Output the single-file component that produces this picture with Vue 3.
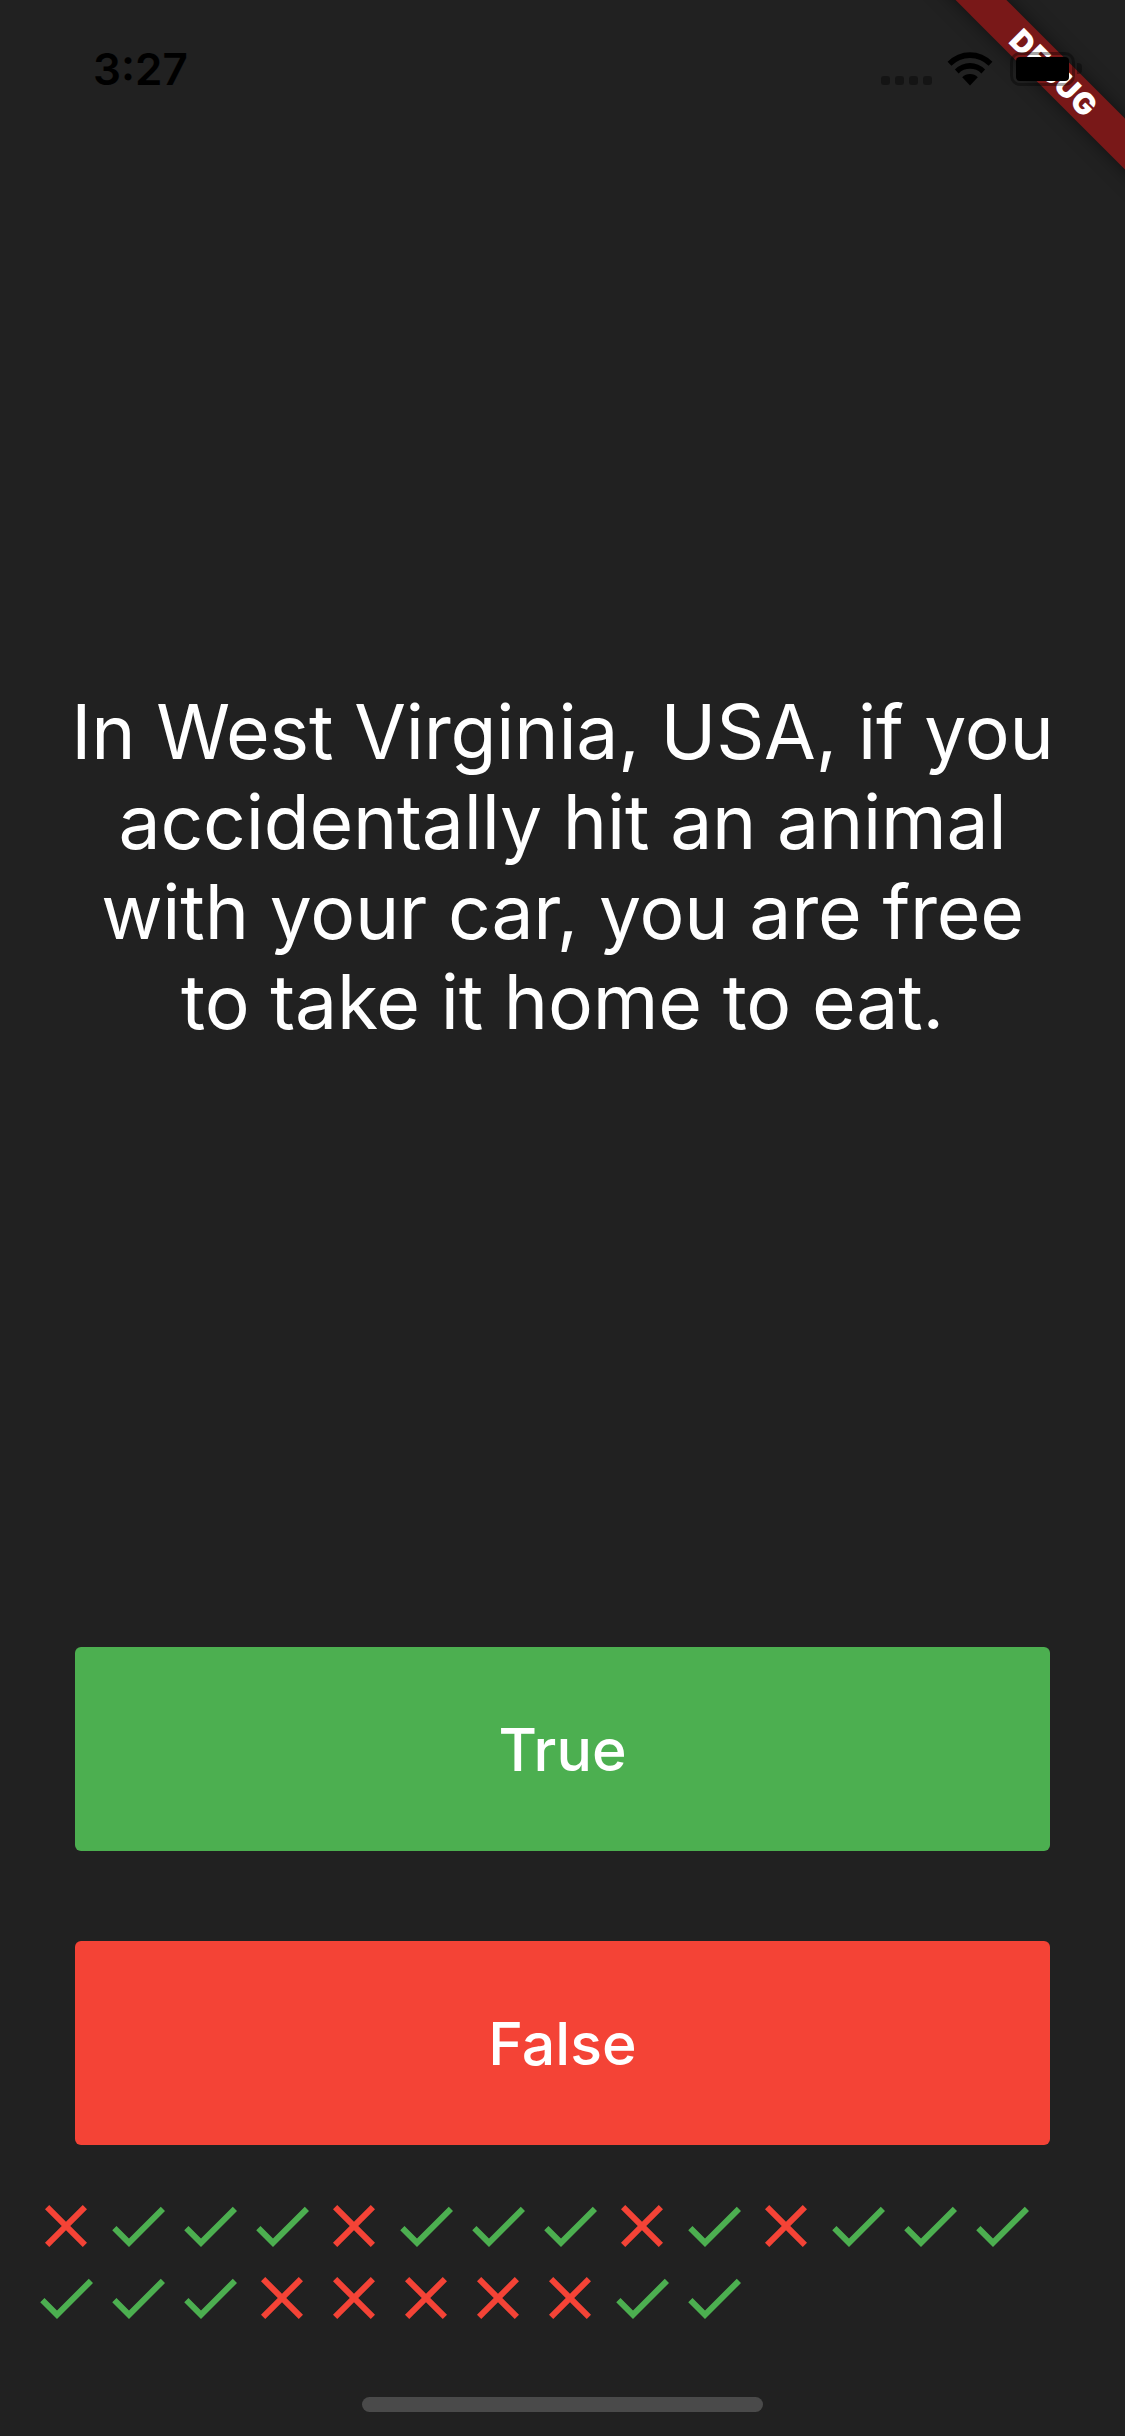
<script setup>
const rows = [
  ['x','c','c','c','x','c','c','c','x','c','x','c','c','c'],
  ['c','c','c','x','x','x','x','x','c','c']
]
const scores = rows.flat()
const check = 'M9 16.17L4.83 12l-1.42 1.41L9 19 21 7l-1.41-1.41z'
const close = 'M19 6.41L17.59 5 12 10.59 6.41 5 5 6.41 10.59 12 5 17.59 6.41 19 12 13.41 17.59 19 19 17.59 13.41 12z'
</script>

<template>
  <div class="screen">
    <header class="status">
      <span class="time">3:27</span>
      <div class="status-icons">
        <div class="dots"><i></i><i></i><i></i><i></i></div>
        <svg class="wifi" width="46" height="34" viewBox="0 0 46 34">
          <path d="M23 33.5 15.2 25.2a11 11 0 0 1 15.6 0z" fill="#000"/>
          <path d="M11.6 21.4 7.9 17.5a21 21 0 0 1 30.2 0l-3.7 3.9a16 16 0 0 0-22.8 0z" fill="#000"/>
          <path d="M4.4 13.8.6 9.8a31 31 0 0 1 44.8 0l-3.8 4a26 26 0 0 0-37.2 0z" fill="#000"/>
        </svg>
        <div class="battery"><div class="battery-fill"></div></div>
      </div>
    </header>

    <main class="question">
      <p>In West Virginia, USA, if you accidentally hit an animal with your car, you are free to take it home to eat.</p>
    </main>

    <div class="actions">
      <button class="answer true">True</button>
      <button class="answer false">False</button>
    </div>

    <div class="scores">
      <svg v-for="(s, i) in scores" :key="i" width="72" height="72" viewBox="0 0 24 24">
        <path :d="s === 'c' ? check : close" :fill="s === 'c' ? '#4caf50' : '#f44336'"/>
      </svg>
    </div>

    <div class="home-bar"><div class="home-pill"></div></div>

    <div class="banner"><span>DEBUG</span></div>
  </div>
</template>

<style scoped>
.screen {
  position: relative;
  width: 1125px;
  height: 2436px;
  overflow: hidden;
  background: #212121;
  display: flex;
  flex-direction: column;
  font-family: Inter, "Liberation Sans", sans-serif;
}
.status {
  position: relative;
  z-index: 2;
  height: 132px;
  flex: none;
  display: flex;
  justify-content: space-between;
  align-items: flex-start;
  padding: 43px 43px 0 93px;
  box-sizing: border-box;
}
.time {
  color: #000;
  font-size: 44px;
  font-weight: 600;
  line-height: 52px;
}
.status-icons {
  display: flex;
  align-items: flex-start;
  margin-top: 9px;
}
.dots {
  display: flex;
  gap: 5px;
  margin-top: 24px;
  margin-right: 15px;
}
.dots i {
  display: block;
  width: 9px;
  height: 9px;
  border-radius: 3px;
  background: #141414;
}
.wifi { margin-right: 17px; }
.battery {
  position: relative;
  width: 65px;
  height: 34px;
  margin-right: 7px;
  box-sizing: border-box;
  border: 3px solid rgba(0,0,0,.35);
  border-radius: 10px;
  padding: 2px 3px;
}
.battery::after {
  content: "";
  position: absolute;
  right: -10px;
  top: 8px;
  width: 5px;
  height: 11px;
  border-radius: 0 4px 4px 0;
  background: rgba(0,0,0,.35);
}
.battery-fill {
  width: 100%;
  height: 100%;
  background: #000;
  border-radius: 4px;
}
.question {
  flex: none;
  height: 1515px;
  box-sizing: border-box;
  padding: 0 60px 46px;
  display: flex;
  align-items: center;
  justify-content: center;
}
.question p {
  margin: 0;
  color: #fff;
  font-size: 75px;
  line-height: 90px;
  letter-spacing: -0.2px;
  text-align: center;
  font-weight: 400;
}
.actions {
  flex: none;
  display: flex;
  flex-direction: column;
  gap: 90px;
  padding: 0 75px;
}
.answer {
  height: 204px;
  border: none;
  border-radius: 6px;
  color: #fff;
  font-family: inherit;
  font-size: 59px;
  font-weight: 500;
  padding: 0;
}
.true { background: #4caf50; }
.false { background: #f44336; }
.scores {
  flex: none;
  display: flex;
  flex-wrap: wrap;
  width: 1065px;
  margin-top: 45px;
  padding-left: 30px;
  box-sizing: border-box;
}
.scores svg { display: block; }
.home-bar {
  flex: none;
  display: flex;
  justify-content: center;
  margin-top: 63px;
}
.home-pill {
  width: 401px;
  height: 15px;
  border-radius: 8px;
  background: #4a4a4a;
}
.banner {
  position: absolute;
  z-index: 1;
  top: 54px;
  right: -128px;
  width: 400px;
  height: 36px;
  background: #791818;
  transform: rotate(45deg);
  display: flex;
  align-items: center;
  justify-content: center;
  box-shadow: 0 0 18px rgba(0,0,0,.5);
}
.banner span {
  color: #fff;
  font-size: 30px;
  font-weight: 900;
  letter-spacing: 1px;
  line-height: 36px;
  margin-left: 3px;
}
</style>

<style>
html, body { margin: 0; background: #212121; }
</style>
